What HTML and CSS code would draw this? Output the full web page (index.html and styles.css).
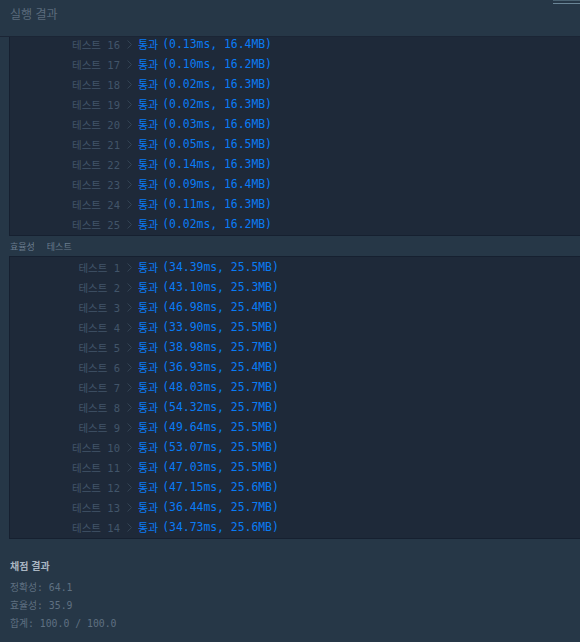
FILE: index.html
```html
<!DOCTYPE html>
<html lang="ko">
<head>
<meta charset="utf-8">
<title>실행 결과</title>
<link rel="stylesheet" href="styles.css">
</head>
<body>
<div class="panel">
  <div class="handle"><span></span><span></span></div>
  <header class="panel-head">실행 결과</header>
  <div class="box box-top">
    <ul class="rows rows-scrolled">
      <li class="row"><span class="label">테스트 16</span><svg class="chev" viewBox="0 0 5 9"><polyline points="0.5,0.5 4.5,4.5 0.5,8.5"/></svg><span class="ok">통과</span><span class="res">(0.13ms, 16.4MB)</span></li>
      <li class="row"><span class="label">테스트 17</span><svg class="chev" viewBox="0 0 5 9"><polyline points="0.5,0.5 4.5,4.5 0.5,8.5"/></svg><span class="ok">통과</span><span class="res">(0.10ms, 16.2MB)</span></li>
      <li class="row"><span class="label">테스트 18</span><svg class="chev" viewBox="0 0 5 9"><polyline points="0.5,0.5 4.5,4.5 0.5,8.5"/></svg><span class="ok">통과</span><span class="res">(0.02ms, 16.3MB)</span></li>
      <li class="row"><span class="label">테스트 19</span><svg class="chev" viewBox="0 0 5 9"><polyline points="0.5,0.5 4.5,4.5 0.5,8.5"/></svg><span class="ok">통과</span><span class="res">(0.02ms, 16.3MB)</span></li>
      <li class="row"><span class="label">테스트 20</span><svg class="chev" viewBox="0 0 5 9"><polyline points="0.5,0.5 4.5,4.5 0.5,8.5"/></svg><span class="ok">통과</span><span class="res">(0.03ms, 16.6MB)</span></li>
      <li class="row"><span class="label">테스트 21</span><svg class="chev" viewBox="0 0 5 9"><polyline points="0.5,0.5 4.5,4.5 0.5,8.5"/></svg><span class="ok">통과</span><span class="res">(0.05ms, 16.5MB)</span></li>
      <li class="row"><span class="label">테스트 22</span><svg class="chev" viewBox="0 0 5 9"><polyline points="0.5,0.5 4.5,4.5 0.5,8.5"/></svg><span class="ok">통과</span><span class="res">(0.14ms, 16.3MB)</span></li>
      <li class="row"><span class="label">테스트 23</span><svg class="chev" viewBox="0 0 5 9"><polyline points="0.5,0.5 4.5,4.5 0.5,8.5"/></svg><span class="ok">통과</span><span class="res">(0.09ms, 16.4MB)</span></li>
      <li class="row"><span class="label">테스트 24</span><svg class="chev" viewBox="0 0 5 9"><polyline points="0.5,0.5 4.5,4.5 0.5,8.5"/></svg><span class="ok">통과</span><span class="res">(0.11ms, 16.3MB)</span></li>
      <li class="row"><span class="label">테스트 25</span><svg class="chev" viewBox="0 0 5 9"><polyline points="0.5,0.5 4.5,4.5 0.5,8.5"/></svg><span class="ok">통과</span><span class="res">(0.02ms, 16.2MB)</span></li>
    </ul>
  </div>
  <div class="section-label"><span>효율성</span><span>테스트</span></div>
  <div class="box box-bottom">
    <ul class="rows">
      <li class="row"><span class="label">테스트 1</span><svg class="chev" viewBox="0 0 5 9"><polyline points="0.5,0.5 4.5,4.5 0.5,8.5"/></svg><span class="ok">통과</span><span class="res">(34.39ms, 25.5MB)</span></li>
      <li class="row"><span class="label">테스트 2</span><svg class="chev" viewBox="0 0 5 9"><polyline points="0.5,0.5 4.5,4.5 0.5,8.5"/></svg><span class="ok">통과</span><span class="res">(43.10ms, 25.3MB)</span></li>
      <li class="row"><span class="label">테스트 3</span><svg class="chev" viewBox="0 0 5 9"><polyline points="0.5,0.5 4.5,4.5 0.5,8.5"/></svg><span class="ok">통과</span><span class="res">(46.98ms, 25.4MB)</span></li>
      <li class="row"><span class="label">테스트 4</span><svg class="chev" viewBox="0 0 5 9"><polyline points="0.5,0.5 4.5,4.5 0.5,8.5"/></svg><span class="ok">통과</span><span class="res">(33.90ms, 25.5MB)</span></li>
      <li class="row"><span class="label">테스트 5</span><svg class="chev" viewBox="0 0 5 9"><polyline points="0.5,0.5 4.5,4.5 0.5,8.5"/></svg><span class="ok">통과</span><span class="res">(38.98ms, 25.7MB)</span></li>
      <li class="row"><span class="label">테스트 6</span><svg class="chev" viewBox="0 0 5 9"><polyline points="0.5,0.5 4.5,4.5 0.5,8.5"/></svg><span class="ok">통과</span><span class="res">(36.93ms, 25.4MB)</span></li>
      <li class="row"><span class="label">테스트 7</span><svg class="chev" viewBox="0 0 5 9"><polyline points="0.5,0.5 4.5,4.5 0.5,8.5"/></svg><span class="ok">통과</span><span class="res">(48.03ms, 25.7MB)</span></li>
      <li class="row"><span class="label">테스트 8</span><svg class="chev" viewBox="0 0 5 9"><polyline points="0.5,0.5 4.5,4.5 0.5,8.5"/></svg><span class="ok">통과</span><span class="res">(54.32ms, 25.7MB)</span></li>
      <li class="row"><span class="label">테스트 9</span><svg class="chev" viewBox="0 0 5 9"><polyline points="0.5,0.5 4.5,4.5 0.5,8.5"/></svg><span class="ok">통과</span><span class="res">(49.64ms, 25.5MB)</span></li>
      <li class="row"><span class="label">테스트 10</span><svg class="chev" viewBox="0 0 5 9"><polyline points="0.5,0.5 4.5,4.5 0.5,8.5"/></svg><span class="ok">통과</span><span class="res">(53.07ms, 25.5MB)</span></li>
      <li class="row"><span class="label">테스트 11</span><svg class="chev" viewBox="0 0 5 9"><polyline points="0.5,0.5 4.5,4.5 0.5,8.5"/></svg><span class="ok">통과</span><span class="res">(47.03ms, 25.5MB)</span></li>
      <li class="row"><span class="label">테스트 12</span><svg class="chev" viewBox="0 0 5 9"><polyline points="0.5,0.5 4.5,4.5 0.5,8.5"/></svg><span class="ok">통과</span><span class="res">(47.15ms, 25.6MB)</span></li>
      <li class="row"><span class="label">테스트 13</span><svg class="chev" viewBox="0 0 5 9"><polyline points="0.5,0.5 4.5,4.5 0.5,8.5"/></svg><span class="ok">통과</span><span class="res">(36.44ms, 25.7MB)</span></li>
      <li class="row"><span class="label">테스트 14</span><svg class="chev" viewBox="0 0 5 9"><polyline points="0.5,0.5 4.5,4.5 0.5,8.5"/></svg><span class="ok">통과</span><span class="res">(34.73ms, 25.6MB)</span></li>
    </ul>
  </div>
  <section class="summary">
    <h3 class="summary-title">채점 결과</h3>
    <p class="summary-line">정확성: 64.1</p>
    <p class="summary-line">효율성: 35.9</p>
    <p class="summary-line">합계: 100.0 / 100.0</p>
  </section>
</div>
</body>
</html>
```
FILE: styles.css
```css
html, body {
  margin: 0;
  padding: 0;
  background: #263747;
}
.panel {
  position: relative;
  width: 580px;
  height: 642px;
  overflow: hidden;
  background: #263747;
  font-family: "DejaVu Sans Mono", "Noto Sans CJK KR", monospace;
}
.handle {
  position: absolute;
  top: 0;
  right: 0;
  width: 27px;
  display: flex;
  flex-direction: column;
  gap: 2px;
}
.handle span {
  display: block;
  height: 1px;
  background: #6a8596;
}
.handle span:first-child {
  background: #4a6272;
}
.panel-head {
  height: 37px;
  box-sizing: border-box;
  padding: 6px 10px 0;
  font-family: "Noto Sans CJK KR", sans-serif;
  font-size: 12px;
  line-height: 16px;
  color: #5b6b7c;
  border-bottom: 1px solid #1b2535;
}
.box {
  margin-left: 9px;
  background: #1e2939;
  border-left: 1px solid #162030;
  border-bottom: 1px solid #162030;
  overflow: hidden;
}
.box-top {
  height: 198px;
}
.box-bottom {
  border-top: 1px solid #162030;
  padding-bottom: 1px;
}
.rows {
  list-style: none;
  margin: 0;
  padding: 0;
}
.rows-scrolled {
  margin-top: -3px;
}
.row {
  display: flex;
  align-items: center;
  height: 20px;
  font-size: 11.4px;
  white-space: pre;
}
.label {
  width: 110px;
  text-align: right;
  font-size: 10.5px;
  color: #42556a;
}
.chev {
  width: 5px;
  height: 9px;
  margin: 0 6px 0 7px;
  fill: none;
  stroke: #334354;
  stroke-width: 1;
}
.ok {
  color: #0a7cf5;
  font-family: "Noto Sans CJK KR", sans-serif;
  font-size: 11px;
  margin-right: 4px;
}
.res {
  color: #0a7cf5;
}
.section-label {
  height: 20px;
  display: flex;
  align-items: center;
  gap: 12px;
  padding-left: 10px;
  font-family: "Noto Sans CJK KR", sans-serif;
  font-size: 9px;
  color: #6a7c8e;
}
.summary {
  padding: 20px 10px 0;
}
.summary-title {
  margin: 0 0 6px;
  font-family: "Noto Sans CJK KR", sans-serif;
  font-size: 10px;
  font-weight: bold;
  line-height: 14px;
  color: #a9b6c2;
}
.summary-line {
  margin: 0;
  font-size: 9.8px;
  line-height: 18px;
  color: #5f7081;
}
```
